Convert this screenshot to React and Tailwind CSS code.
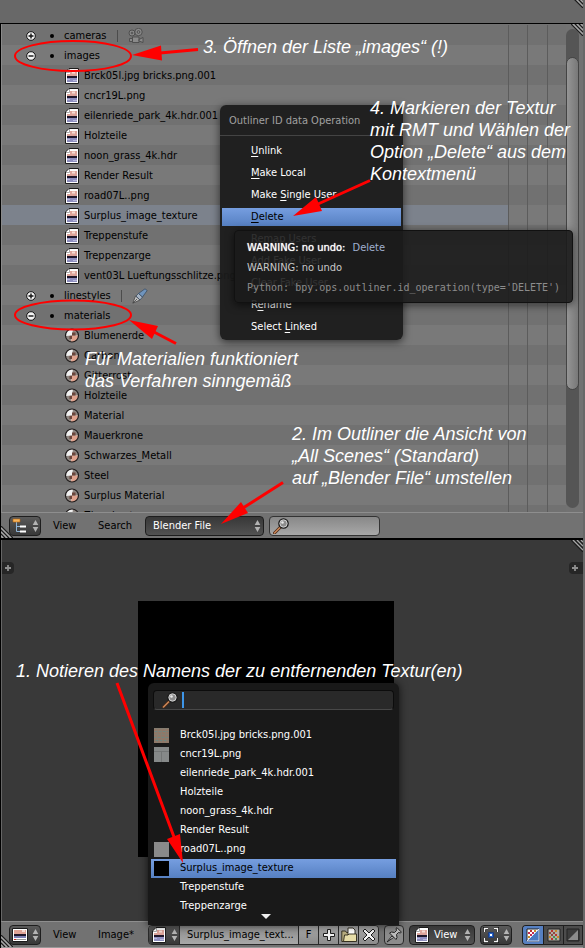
import React, { useState } from 'react';

const IMAGES = [
    'Brck05l.jpg bricks.png.001',
    'cncr19L.png',
    'eilenriede_park_4k.hdr.001',
    'Holzteile',
    'noon_grass_4k.hdr',
    'Render Result',
    'road07L..png',
    'Surplus_image_texture',
    'Treppenstufe',
    'Treppenzarge',
    'vent03L Lueftungsschlitze.png',
];

const MATERIALS = [
    'Blumenerde',
    'Carbon',
    'Gitterrost',
    'Holzteile',
    'Material',
    'Mauerkrone',
    'Schwarzes_Metall',
    'Steel',
    'Surplus Material',
    'Ziegel_rot',
];

// [text before the shortcut letter, shortcut letter, rest]
const OPERATIONS = [
    ['', 'U', 'nlink'],
    ['', 'M', 'ake Local'],
    ['Make ', 'S', 'ingle User'],
    ['', 'D', 'elete'],
    ['Remap Users', '', ''],
    ['', 'A', 'dd Fake User'],
    ['', 'C', 'lear Fake User'],
    ['R', 'e', 'name'],
    ['Select ', 'L', 'inked'],
];

const SELECTED = 'Surplus_image_texture';

function ImageIcon() {
    return (
        <svg className="w-4 h-4 shrink-0" viewBox="0 0 16 16">
            <path d="M5 .5h9.500v15H1.500V4z" fill="#fff" stroke="#1c1c1c" />
            <path d="M6 3h7v6H3V6h3z" fill="#dda49a" />
            <path d="M8 3.500h3v2H8z" fill="#f6dcd4" />
            <path d="M3 8h10v2H3z" fill="#20182c" />
            <path d="M3 10h10v4H3z" fill="#8f8fc0" />
            <path d="M3 11h3v1H3zM9 12h4v1H9z" fill="#b9b9dd" />
            <path d="M5.500 1v3.500H2" fill="none" stroke="#aaa" />
        </svg>
    );
}

function MaterialIcon() {
    return (
        <svg className="w-4 h-4 shrink-0" viewBox="0 0 16 16">
            <circle cx="8" cy="7.500" r="6.500" fill="#f0f0f0" />
            <path d="M9 1a6.500 6.500 0 0 1 5.500 6.500L8 8z" fill="#8f8782" />
            <path d="M8 7.500l-6.500.5A6.500 6.500 0 0 0 7 14z" fill="#8f8782" />
            <path d="M8 7.500h6.500A6.500 6.500 0 0 1 7 14z" fill="#e0a38e" />
            <path d="M8 7.500h3.500v-3H8zM8 7.500v3.500H5.500V8z" fill="#6b443a" />
            <circle cx="8" cy="7.500" r="6.500" fill="none" stroke="#1e1a1a" strokeWidth="1.200" />
        </svg>
    );
}

function CameraIcon() {
    return (
        <svg className="w-4 h-4 shrink-0" viewBox="0 0 16 16" fill="#8a8a8a" stroke="#4a4a4a" strokeWidth=".9">
            <circle cx="4" cy="5" r="3" />
            <circle cx="10.500" cy="4" r="3.700" />
            <circle cx="4" cy="5" r=".9" />
            <circle cx="10.500" cy="4" r="1.400" />
            <path d="M4.500 9h6.500v5.500H4.500z" />
            <path d="M11 11.500l4-2v5l-4-1.500zM4.500 10.500h-3v3h3z" />
        </svg>
    );
}

function PenIcon() {
    return (
        <svg className="w-4 h-4 shrink-0" viewBox="0 0 16 16">
            <path d="M.8 15.200L3.500 8l4.500 4z" fill="#c4c4c4" stroke="#444" strokeWidth=".8" />
            <path d="M1 15l4-4" stroke="#444" strokeWidth=".8" />
            <path d="M4 8l2.500-2.500L10.500 9 8 12z" fill="#a7b4c4" stroke="#3c4c60" strokeWidth=".8" />
            <path d="M6.500 5.500L13 .8l2.200 1.700L10.500 9z" fill="#6f94bd" stroke="#3c4c60" strokeWidth=".8" />
        </svg>
    );
}

function ToggleIcon({ open }) {
    return (
        <svg className="w-2.5 h-2.5 shrink-0" viewBox="0 0 10 10">
            <circle cx="5" cy="5" r="4.300" fill="#f4f4f4" stroke="#111" />
            <path d={open ? 'M2.500 5h5' : 'M2.500 5h5M5 2.500v5'} stroke="#111" strokeWidth="1.400" />
        </svg>
    );
}

function UpDown() {
    return (
        <svg className="w-[7px] h-[14px] shrink-0" viewBox="0 0 7 14" fill="#b4b4b4">
            <path d="M3.500 1L6.300 6H.7zM3.500 13L6.300 8H.7z" />
        </svg>
    );
}

function Magnifier() {
    return (
        <svg className="w-4 h-4 shrink-0" viewBox="0 0 16 16">
            <path d="M1.500 15L7 9.500" stroke="#4a2a18" strokeWidth="3" strokeLinecap="round" />
            <path d="M1.500 15L7 9.500" stroke="#d08a5a" strokeWidth="1.500" strokeLinecap="round" />
            <circle cx="10.500" cy="5.500" r="4.600" fill="#9a9a9a" stroke="#1a1a1a" strokeWidth="1.400" />
            <circle cx="10.500" cy="5.500" r="3.600" fill="#8d8d8d" stroke="#ddd" strokeWidth=".8" />
            <circle cx="9.500" cy="4.500" r="1.300" fill="#e8e8e8" />
        </svg>
    );
}

function OutlinerIcon() {
    return (
        <svg className="w-4 h-4 shrink-0" viewBox="0 0 16 16">
            <path d="M4.500 4v9.500H8M4.500 8.500H8" fill="none" stroke="#8fb4d8" />
            <path d="M1 1h7v3H1z" fill="#f7b45c" stroke="#b8640c" strokeWidth=".6" />
            <path d="M8 7.500h6v2H8zM8 12.500h6v2H8z" fill="#fff" />
        </svg>
    );
}

function ImageEditorIcon() {
    return (
        <svg className="w-4 h-4 shrink-0" viewBox="0 0 16 16">
            <path d="M.5 1.500h15v13H.5z" fill="#fff" stroke="#1c1c1c" />
            <path d="M2 3h12v4H2z" fill="#e0a497" />
            <path d="M10 3h3v2h-3z" fill="#f6dcd4" />
            <path d="M2 7h12v2H2z" fill="#20182c" />
            <path d="M2 9h12v2H2z" fill="#7d80b4" />
            <path d="M2 12.500h12" stroke="#999" />
            <path d="M2 12.500h2" stroke="#c22" />
        </svg>
    );
}

function PlusIcon() {
    return (
        <svg className="w-3.5 h-3.5" viewBox="0 0 14 14">
            <path d="M5.500 1.500h3v4h4v3h-4v4h-3v-4h-4v-3h4z" fill="#f2f2f2" stroke="#1c1c1c" />
        </svg>
    );
}

function CrossIcon() {
    return (
        <svg className="w-3.5 h-3.5" viewBox="0 0 14 14">
            <path d="M3 1L7 5l4-4 2 2-4 4 4 4-2 2-4-4-4 4-2-2 4-4-4-4z" fill="#f2f2f2" stroke="#1c1c1c" />
        </svg>
    );
}

function FolderIcon() {
    return (
        <svg className="w-4 h-4" viewBox="0 0 16 16" stroke="#2b2718" strokeWidth=".9">
            <path d="M.8 4h3.700l1 1.500h7.500v9H.8z" fill="#b9ae80" />
            <path d="M7 1h5l2 2v7H7z" fill="#fff" />
            <path d="M3.500 8h3.500l1-1h7.500v7.500H2.500z" fill="#e6dda8" />
        </svg>
    );
}

function PinIcon() {
    return (
        <svg className="w-4 h-4" viewBox="0 0 16 16">
            <path d="M1 15l5-6 1.500 1.500z" fill="#ddd" stroke="#222" />
            <path d="M3.500 6l2-1 3 .5 2-2L10 1.500 11 .7 15.300 5l-.8 1-2-.5-2 2 .5 3-1 2z" fill="#bdbdbd" stroke="#222" />
        </svg>
    );
}

function PivotIcon() {
    return (
        <svg className="w-4 h-4 shrink-0" viewBox="0 0 16 16">
            <path d="M1.500 5V1.500H5M11 1.500h3.500V5M14.500 11v3.500H11M5 14.500H1.500V11" fill="none" stroke="#111" strokeWidth="3" />
            <path d="M1.500 5V1.500H5M11 1.500h3.500V5M14.500 11v3.500H11M5 14.500H1.500V11" fill="none" stroke="#f4f4f4" strokeWidth="1.400" />
            <path d="M5.500 5.500h5v5h-5z" fill="#2b66c8" stroke="#1a3c80" />
            <path d="M7 7h2v2H7z" fill="#fff" />
        </svg>
    );
}

function ChannelIcon({ type }) {
    return (
        <svg className="w-3.5 h-3.5" viewBox="0 0 14 14">
            {type === 'depth' ? (
                <>
                    <path d="M1 1h12v12H1z" fill="#3c3c3c" stroke="#222" />
                    <path d="M12 2v10H2z" fill="#8d8d8d" />
                </>
            ) : (
                <>
                    <path d="M1 1h12v12H1z" fill={type === 'rgba' ? '#fff' : '#b4aea4'} stroke="#222" />
                    <path d="M4 2h2v2H4zM8 6h2v2H8zM4 10h2v2H4z" fill="#b8332e" />
                    <path d="M8 2h2v2H8zM2 8h2v2H2zM10 8h2v2h-2z" fill="#c88a2a" />
                    <path d="M2 4h2v2H2zM6 4h2v2H6zM4 6h2v2H4z" fill={type === 'rgba' ? '#c22a50' : '#8c4844'} />
                    <path d="M6 8h2v2H6zM8 10h2v2H8z" fill="#4a8a5a" />
                    {type === 'rgba' && <path d="M13 1v12H1z" fill="#4a7ac0" stroke="#e8eefa" strokeWidth=".8" />}
                </>
            )}
        </svg>
    );
}

function Corner({ className }) {
    return (
        <svg className={className} viewBox="0 0 12 12" fill="none">
            <path d="M0 0l12 12M4 0l8 8M8 0l4 4" stroke="#1c1c1c" strokeWidth="1.200" />
            <path d="M2 0l10 10M6 0l6 6M10 0l2 2" stroke="#a8a8a8" strokeWidth="1.200" />
        </svg>
    );
}

function Row({ children, selected }) {
    return (
        <li className="flex h-5 odd:bg-[#717171] even:bg-[#797979]">
            <div
                className={`flex flex-1 items-center whitespace-nowrap min-w-0 pt-0.5 ${
                    selected ? 'bg-[#7c828c]' : ''
                }`}
            >
                {children}
            </div>
            <span className="w-[19px] border-l border-[#5c5c5c]" />
            <span className="w-5 border-l border-[#5c5c5c]" />
            <span className="w-[19px] border-l border-[#5c5c5c]" />
        </li>
    );
}

function GroupRow({ name, open, icon }) {
    return (
        <Row>
            <button className="ml-6" aria-label={name}>
                <ToggleIcon open={open} />
            </button>
            <span className="ml-3.5 mr-2.5 w-1 h-1 rounded-full bg-black" />
            <span>{name}</span>
            {icon && <span className="w-px h-3 mx-2.5 bg-[#4c4c4c]" />}
            {icon}
        </Row>
    );
}

function ItemRow({ name, icon, selected }) {
    return (
        <Row selected={selected}>
            <span className="ml-[62px] mr-1">{icon}</span>
            <span>{name}</span>
        </Row>
    );
}

function EditorTypeButton({ label, children }) {
    return (
        <button
            aria-label={label}
            className="flex items-center justify-center gap-1 w-8 h-5 shrink-0 rounded border border-[#1e1e1e] bg-linear-to-b from-[#5a5a5a] to-[#383838]"
        >
            {children}
            <UpDown />
        </button>
    );
}

function OperationMenu() {
    return (
        <div className="absolute left-[220px] top-[105px] w-[183px] pb-1 rounded-md bg-[#1b1b1b]/95 text-white shadow-[0_2px_8px_rgba(0,0,0,0.6)]">
            <h2 className="h-[31px] pl-[9px] mb-1.5 leading-8 border-b border-[#444] text-[#a0a0a0]">
                Outliner ID data Operation
            </h2>
            <div className="flex flex-col gap-1 px-0.5">
                {OPERATIONS.map(([before, key, after]) => (
                    <button
                        key={before + key + after}
                        className={`h-[18px] pl-[29px] text-left leading-[18px] ${
                            key === 'D' ? 'bg-linear-to-b from-[#769ee0] to-[#5680c2] text-black' : ''
                        }`}
                    >
                        {before}
                        <span className="underline underline-offset-2">{key}</span>
                        {after}
                    </button>
                ))}
            </div>
        </div>
    );
}

function Tooltip() {
    return (
        <div
            role="tooltip"
            className="absolute left-[234px] top-[230px] w-[339px] px-3 pt-[7px] pb-1 rounded border border-[#111] bg-[#1b1b1b]/90 leading-5 text-[#c8c8c8] whitespace-nowrap shadow-[0_2px_8px_rgba(0,0,0,0.6)]"
        >
            <p className="text-white [text-shadow:0_0_1px_#fff]">
                WARNING: no undo: <span className="ml-1 text-[#a0b0d0] [text-shadow:none]">Delete</span>
            </p>
            <p>WARNING: no undo</p>
            <p className="font-['DejaVu_Sans_Mono',monospace] text-[10px] leading-5 text-[#8c8c8c]">
                Python: bpy.ops.outliner.id_operation(type='DELETE')
            </p>
        </div>
    );
}

function Outliner() {
    const [display, setDisplay] = useState('Blender File');

    return (
        <section className="relative border-t border-l border-black bg-[#727272]">
            <div className="flex h-[488px] overflow-hidden border-l border-[#8a8a8a] pt-px">
                <ul className="flex-1 min-w-0">
                    <GroupRow name="cameras" icon={<CameraIcon />} />
                    <GroupRow name="images" open />
                    {IMAGES.map((name) => (
                        <ItemRow key={name} name={name} icon={<ImageIcon />} selected={name === SELECTED} />
                    ))}
                    <GroupRow name="linestyles" icon={<PenIcon />} />
                    <GroupRow name="materials" open />
                    {MATERIALS.map((name) => (
                        <ItemRow key={name} name={name} icon={<MaterialIcon />} />
                    ))}
                </ul>
                <div className="w-[13px] my-1 mr-1 rounded-full bg-[#555]">
                    <div className="mt-7 h-[333px] rounded-full border border-[#444] bg-linear-to-r from-[#959595] to-[#787878]" />
                </div>
            </div>
            <Corner className="absolute right-0 top-0 w-3 h-3" />
            <header className="relative flex items-center h-[26px] pl-2 border-t border-[#8e8e8e] bg-[#727272]">
                <Corner className="absolute left-0 bottom-0 w-3 h-3 rotate-180" />
                <EditorTypeButton label="Outliner">
                    <OutlinerIcon />
                </EditorTypeButton>
                <button className="ml-3 w-[45px] text-left">View</button>
                <button className="w-[47px] text-left">Search</button>
                <div className="relative w-[119px] h-5">
                    <select
                        aria-label="Display mode"
                        value={display}
                        onChange={(e) => setDisplay(e.target.value)}
                        className="w-full h-5 pl-[7px] appearance-none rounded border border-[#1e1e1e] bg-linear-to-b from-[#383838] to-[#525252] text-white"
                    >
                        <option>Blender File</option>
                        <option>All Scenes</option>
                    </select>
                    <span className="absolute right-[3px] top-[3px] pointer-events-none">
                        <UpDown />
                    </span>
                </div>
                <label className="flex items-center ml-[5px] pl-[3px] w-[111px] h-5 rounded border border-[#333] bg-linear-to-b from-[#888] to-[#a8a8a8]">
                    <Magnifier />
                    <input aria-label="Filter" className="w-full min-w-0 bg-transparent outline-none" />
                </label>
            </header>
        </section>
    );
}

function Thumbnail({ name }) {
    if (name.startsWith('Brck')) {
        return (
            <svg className="w-full h-full" viewBox="0 0 15 15">
                <path d="M0 0h15v15H0z" fill="#857d70" />
                <path d="M0 2h15M0 5h15M0 8h15M0 11h15M0 14h15" stroke="#9a7560" strokeDasharray="3 1" />
                <path d="M1 3.500h13M0 9.500h15M2 12.500h12" stroke="#6e8580" strokeDasharray="2 2" />
            </svg>
        );
    }
    if (name.startsWith('cncr')) {
        return (
            <svg className="w-full h-full" viewBox="0 0 15 15">
                <path d="M0 0h15v15H0z" fill="#868989" />
                <path d="M0 4.500h15M7.500 5v10" stroke="#737676" />
            </svg>
        );
    }
    if (name.startsWith('road')) return <div className="w-full h-full bg-[#8a8a8a]" />;
    if (name === SELECTED) return <div className="w-full h-full bg-black" />;
    return null;
}

function ImagePopup() {
    return (
        <div className="absolute left-0 bottom-full w-[251px] px-[3px] pb-1.5 rounded-t-md bg-[#191919] text-white shadow-[0_0_8px_rgba(0,0,0,0.7)]">
            <label className="flex items-center h-5 mt-[7px] mx-0.5 pl-2 rounded border border-[#0c0c0c] border-b-[#484848] bg-[#292929]">
                <Magnifier />
                <span className="ml-1 w-0.5 h-4 bg-[#3d95e8]" />
                <input aria-label="Search images" className="w-full min-w-0 bg-transparent outline-none" />
            </label>
            <ul className="mt-4">
                {IMAGES.slice(0, -1).map((name) => (
                    <li key={name}>
                        <button
                            className={`flex items-center w-full h-[19px] pl-[3px] gap-[11px] text-left ${
                                name === SELECTED ? 'bg-linear-to-b from-[#769ee0] to-[#5680c2] text-black' : ''
                            }`}
                        >
                            <span className="w-[15px] h-[15px]">
                                <Thumbnail name={name} />
                            </span>
                            {name}
                        </button>
                    </li>
                ))}
            </ul>
            <div className="flex justify-center pr-4 -mt-0.5">
                <svg className="w-2.5 h-[5px]" viewBox="0 0 10 5">
                    <path d="M0 0h10L5 5z" fill="#eee" />
                </svg>
            </div>
        </div>
    );
}

function RegionTab({ className, label }) {
    return (
        <button aria-label={label} className={className}>
            <svg className="w-3 h-3" viewBox="0 0 12 12">
                <path d="M3 6h6M6 3v6" stroke="#8e8e8e" strokeWidth="1.800" />
            </svg>
        </button>
    );
}

const toolButton =
    'flex items-center justify-center w-5 h-full border-l border-[#2a2a2a] bg-linear-to-b from-[#a8a8a8] to-[#8c8c8c]';

function ImageEditor() {
    return (
        <section className="flex flex-col flex-1 border-t-2 border-l border-black bg-[#393939]">
            <div className="relative flex-1 pt-[61px] pb-16 pl-[136px] border-l border-[#666]">
                <Corner className="absolute right-0 top-0 w-3 h-3" />
                <RegionTab label="Tools" className="absolute left-0 top-[22px] w-3 h-3 rounded-r bg-[#262626]" />
                <RegionTab label="Properties" className="absolute right-0 top-[22px] w-3.5 h-3 rounded-l bg-[#262626]" />
                <div className="w-64 h-64 bg-black" />
            </div>
            <header className="relative flex items-center h-[27px] pl-2 border-t border-b border-t-[#8e8e8e] border-b-[#999] bg-[#727272]">
                <Corner className="absolute left-0 bottom-0 w-3 h-3 rotate-180" />
                <EditorTypeButton label="Image Editor">
                    <ImageEditorIcon />
                </EditorTypeButton>
                <button className="ml-3 w-[45px] text-left">View</button>
                <button className="w-[50px] text-left">Image*</button>
                <div className="relative shrink-0">
                    <ImagePopup />
                    <div className="flex h-5 w-[231px] rounded border border-[#2a2a2a] overflow-hidden">
                        <button
                            aria-label="Browse image"
                            className="flex items-center justify-center gap-1 w-[30px] shrink-0 bg-linear-to-b from-[#5a5a5a] to-[#383838]"
                        >
                            <ImageIcon />
                            <UpDown />
                        </button>
                        <input
                            aria-label="Image name"
                            defaultValue="Surplus_image_text..."
                            className="flex-1 min-w-0 pl-[7px] border-l border-[#2a2a2a] bg-linear-to-b from-[#8c8c8c] to-[#a8a8a8] outline-none"
                        />
                        <button className={toolButton}>F</button>
                        <button className={toolButton} aria-label="New image">
                            <PlusIcon />
                        </button>
                        <button className={toolButton} aria-label="Open image">
                            <FolderIcon />
                        </button>
                        <button className={toolButton} aria-label="Unlink image">
                            <CrossIcon />
                        </button>
                    </div>
                </div>
                <button
                    aria-label="Pin"
                    className="flex items-center justify-center ml-[5px] w-5 h-5 shrink-0 rounded border border-[#2a2a2a] bg-[#8c8c8c]"
                >
                    <PinIcon />
                </button>
                <button className="flex items-center ml-[5px] pl-1 pr-[3px] w-[66px] h-5 shrink-0 rounded border border-[#1e1e1e] bg-linear-to-b from-[#383838] to-[#525252] text-white">
                    <ImageIcon />
                    <span className="ml-1 mr-auto">View</span>
                    <UpDown />
                </button>
                <button
                    aria-label="Pivot"
                    className="flex items-center justify-center gap-1 ml-[5px] w-8 h-5 shrink-0 rounded border border-[#1e1e1e] bg-linear-to-b from-[#5a5a5a] to-[#383838]"
                >
                    <PivotIcon />
                    <UpDown />
                </button>
                <div className="flex h-5 ml-2.5 shrink-0 rounded-l border border-r-0 border-[#1e1e1e] overflow-hidden">
                    <button aria-label="Color and alpha" className="flex items-center justify-center w-5 bg-[#5680c2]">
                        <ChannelIcon type="rgba" />
                    </button>
                    <button aria-label="Color" className="flex items-center justify-center w-5 border-l border-[#1e1e1e] bg-[#4c4c4c]">
                        <ChannelIcon type="rgb" />
                    </button>
                    <button aria-label="Z-buffer" className="flex items-center justify-center w-5 border-x border-[#1e1e1e] bg-[#4c4c4c]">
                        <ChannelIcon type="depth" />
                    </button>
                </div>
            </header>
        </section>
    );
}

function Notes() {
    return (
        <div className="absolute inset-0 pointer-events-none font-['Liberation_Sans',Arial,sans-serif] italic text-lg leading-[22px] text-white whitespace-nowrap">
            <svg className="absolute left-0 top-0 w-[585px] h-[948px]" viewBox="0 0 585 948">
                <g fill="none" stroke="#f00" strokeWidth="2">
                    <ellipse cx="73" cy="56" rx="58" ry="15" />
                    <ellipse cx="73" cy="315" rx="58" ry="14.500" />
                </g>
                <g stroke="#f00" strokeWidth="3">
                    <path d="M198 49.500L160 53M176 343.500L154 332M370 180.500L318 204M283 482.500L243 508M117 683L174 837" />
                </g>
                <g fill="#f00">
                    <path d="M132 55l29-9.500 1 15zM129 320l29 6-6 13zM293 216l23-19 6 14zM221 524l20-22 7 11zM183 863l-16-24 13-5z" />
                </g>
            </svg>
            <p className="absolute left-[203px] top-9">3. Öffnen der Liste „images“ (!)</p>
            <p className="absolute left-[370px] top-[97px]">
                4. Markieren der Textur
                <br />
                mit RMT und Wählen der
                <br />
                Option „Delete“ aus dem
                <br />
                Kontextmenü
            </p>
            <p className="absolute left-[85px] top-[348px]">
                Für Materialien funktioniert
                <br />
                das Verfahren sinngemäß
            </p>
            <p className="absolute left-[292px] top-[423px]">
                2. Im Outliner die Ansicht von
                <br />
                „All Scenes“ (Standard)
                <br />
                auf „Blender File“ umstellen
            </p>
            <p className="absolute left-4 top-[660px]">1. Notieren des Namens der zu entfernenden Textur(en)</p>
        </div>
    );
}

export default function App() {
    return (
        <div className="relative flex flex-col min-h-screen pr-0.5 overflow-hidden bg-[#686868] font-['DejaVu_Sans_Condensed','DejaVu_Sans',sans-serif] text-[11px] leading-4 text-black">
            <div className="relative h-[23px]">
                <Corner className="absolute right-0 -top-1 w-3 h-3" />
            </div>
            <Outliner />
            <ImageEditor />
            <OperationMenu />
            <Tooltip />
            <Notes />
        </div>
    );
}
